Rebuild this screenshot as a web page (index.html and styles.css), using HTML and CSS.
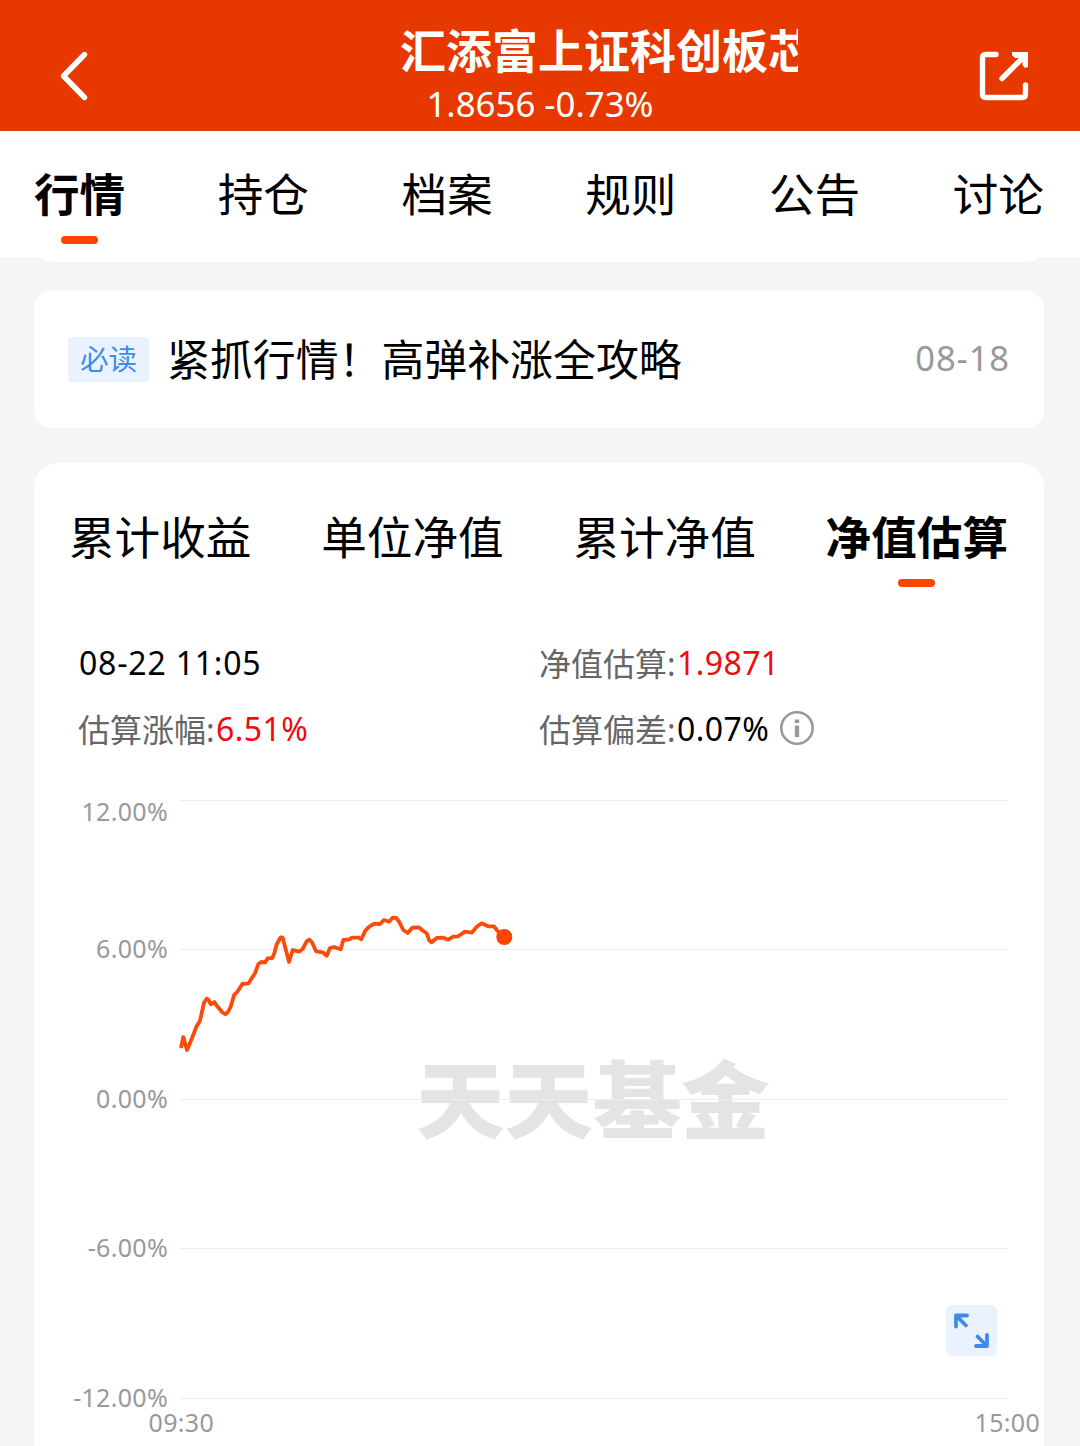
FILE: index.html
```html
<!DOCTYPE html>
<html lang="zh-CN">
<head>
    <meta charset="UTF-8">
    <meta name="viewport" content="width=device-width, initial-scale=1.0">
    <title>汇添富上证科创板芯片</title>
    <link rel="stylesheet" href="styles.css">
</head>
<body>
    <header class="header">
        <svg class="back-icon" viewBox="0 0 32 52" width="32" height="52">
            <path d="M27.5 4.5 L6.5 26 L27.5 47.5" />
        </svg>
        <div class="header-center">
            <h1 class="fund-name">汇添富上证科创板芯</h1>
            <p class="fund-price">1.8656 -0.73%</p>
        </div>
        <svg class="share-icon" viewBox="0 0 52 52" width="52" height="52">
            <path d="M18 4.5 H8 Q4.5 4.5 4.5 8 V44 Q4.5 47.5 8 47.5 H44 Q47.5 47.5 47.5 44 V35" />
            <path d="M24 28.5 L46 6.5" />
            <path class="share-head" d="M34 2 H50 V17 L47 18 L44.5 15 V8 H37 L34 5 Z" />
        </svg>
    </header>

    <nav class="tabs">
        <span class="tab active">行情</span>
        <span class="tab">持仓</span>
        <span class="tab">档案</span>
        <span class="tab">规则</span>
        <span class="tab">公告</span>
        <span class="tab">讨论</span>
    </nav>

    <main class="content">
        <div class="card card-prev"></div>

        <div class="card news">
            <span class="news-tag">必读</span>
            <span class="news-title">紧抓行情！高弹补涨全攻略</span>
            <span class="news-date">08-18</span>
        </div>

        <section class="card chart-card">
            <div class="chart-tabs">
                <span class="tab">累计收益</span>
                <span class="tab">单位净值</span>
                <span class="tab">累计净值</span>
                <span class="tab active">净值估算</span>
            </div>

            <div class="stats">
                <div class="stat stat-time">08-22 11:05</div>
                <div class="stat"><span class="label">净值估算:</span><span class="up">1.9871</span></div>
                <div class="stat"><span class="label">估算涨幅:</span><span class="up">6.51%</span></div>
                <div class="stat">
                    <span class="label">估算偏差:</span><span>0.07%</span>
                    <svg class="info-icon" viewBox="0 0 34 34" width="34" height="34">
                        <circle cx="17" cy="17" r="15.7" />
                        <path d="M17 8.5 V12 M17 14.5 V26" />
                    </svg>
                </div>
            </div>

            <div class="chart">
                <svg viewBox="34 780 1010 666" width="1010" height="666">
                    <!-- Marca de agua -->
                    <text class="watermark" transform="translate(416 1132) scale(1 0.95)" textLength="354">天天基金</text>

                    <!-- Rejilla -->
                    <path class="grid" d="M180 800.5 H1008 M180 949.5 H1008 M180 1099.5 H1008 M180 1248.5 H1008 M180 1398.5 H1008" />

                    <!-- Etiquetas -->
                    <g class="axis" text-anchor="end">
                        <text x="168" y="820.5">12.00%</text>
                        <text x="168" y="957.5">6.00%</text>
                        <text x="168" y="1107.5">0.00%</text>
                        <text x="168" y="1256.5">-6.00%</text>
                        <text x="168" y="1406.5">-12.00%</text>
                        <text x="214" y="1431.5">09:30</text>
                        <text x="1040" y="1431.5">15:00</text>
                    </g>

                    <polyline class="line" points="181,1048 183.3,1037 187,1050 190,1043 194,1033 196.7,1026 200,1020.7 201.7,1013 204,1002.7 206.7,998.7 208.7,1000 210.7,1004.3 214.3,1002 217.3,1006.3 222,1012 225.3,1014.3 228,1012 230.7,1006.7 234,995.3 237.7,991.3 242.3,984 248.7,983.3 251.7,978.3 255.3,972.7 258.3,964 261.3,962 265.3,962.3 267.7,958.3 272.3,958 274.3,953.3 276.7,944.3 280.7,937.3 282.7,937.7 285,946.7 289,962 292.7,950 299,951.7 302.7,949 306.7,941.3 309.3,939.7 312,942.3 316,951.3 322.7,952.3 326.7,955.7 330,948 334,947 340.7,949.3 343.3,940 349.3,939.3 352,937.7 358.7,937.7 361.3,939.3 365.3,930.7 369.3,926.7 374.3,923.7 380,924 384,920 389,921.7 392.7,917.7 396.3,918 399.3,922 403.3,930 407.7,933 412.3,927.7 418.7,927.3 423.3,931 426.7,933.3 429.3,940.7 431.7,942.3 436.7,938 443.3,937.7 448,939.7 453.3,936.7 458.3,936.3 464.7,931.7 472,932.7 476.7,926.7 481.7,923.3 488,926.3 494,926.3 497.3,930.7 504.3,937" />
                    <circle class="dot" cx="504.3" cy="937" r="8" />
                </svg>

                <div class="expand">
                    <svg viewBox="0 0 51 51" width="51" height="51">
                        <path d="M21 10.5 H10 V21.5 M10.5 11 L20 20.5" />
                        <path d="M30 41 H41 V30 M40.5 40.5 L31.5 31.5" />
                    </svg>
                </div>
            </div>
        </section>
    </main>
</body>
</html>
```
FILE: styles.css
```css
* {
    margin: 0;
    padding: 0;
    box-sizing: border-box;
}

body {
    height: 1446px;
    background: #f5f5f5;
    color: #000;
    font-family: 'Noto Sans', 'Noto Sans CJK SC', sans-serif;
    overflow: hidden;
}

svg {
    display: block;
}

/* Cabecera */
.header {
    display: flex;
    justify-content: space-between;
    height: 131px;
    padding: 0 50px 0 57px;
    background: #e73800;
    color: white;
}

.back-icon,
.share-icon {
    margin-top: 50px;
    fill: none;
    stroke: white;
    stroke-width: 5.4;
    stroke-linecap: round;
    stroke-linejoin: round;
}

.share-icon .share-head {
    fill: white;
    stroke: none;
}

.header-center {
    width: 518px;
    margin-left: 11px;
    padding-top: 20px;
}

.fund-name {
    padding-left: 120px;
    font-size: 46px;
    line-height: 60px;
    font-weight: bold;
    white-space: nowrap;
    overflow: hidden;
}

.fund-price {
    font-size: 34.8px;
    line-height: 48px;
    text-align: center;
    text-indent: 2px;
}

/* Pestañas */
.tabs {
    position: relative;
    z-index: 1;
    display: flex;
    justify-content: space-between;
    height: 126px;
    padding: 33px 36px 0 34px;
    background: white;
}

.tab {
    position: relative;
    font-size: 45.6px;
    line-height: 60px;
}

.tab.active {
    font-weight: bold;
}

.tab.active::after {
    content: '';
    position: absolute;
    left: 50%;
    top: 72px;
    width: 37px;
    height: 8px;
    margin-left: -18.5px;
    border-radius: 4px;
    background: #ff4400;
}

.content {
    padding: 0 36px 0 34px;
}

.card {
    background: white;
    border-radius: 18px;
}

.card-prev {
    height: 40px;
    margin-top: -35px;
}

.news {
    display: flex;
    align-items: center;
    height: 137px;
    margin-top: 29px;
    padding: 0 34px;
}

.news-tag {
    width: 81px;
    height: 45px;
    border-radius: 4px;
    background: #eaf2ff;
    color: #3b8cec;
    font-size: 28.5px;
    line-height: 44px;
    text-align: center;
}

.news-title {
    margin-left: 18px;
    font-size: 42.9px;
    line-height: 62px;
}

.news-date {
    margin-left: auto;
    padding-bottom: 3px;
    color: #999;
    font-size: 34.6px;
    line-height: 60px;
    letter-spacing: 0.9px;
}

/* Tarjeta del gráfico */
.chart-card {
    height: 983px;
    margin-top: 35px;
    border-radius: 24px 24px 0 0;
}

.chart-tabs {
    display: flex;
    justify-content: space-between;
    height: 166px;
    padding: 44px 36px 0 35px;
}

.stats {
    display: grid;
    grid-template-columns: 461px 1fr;
    grid-auto-rows: 66px;
    height: 151px;
    padding-left: 44px;
}

.stat {
    display: flex;
    align-items: center;
    font-size: 32px;
    letter-spacing: 0.4px;
}

.stat-time {
    padding-left: 1px;
    letter-spacing: 0.8px;
}

.label {
    margin-right: 1.5px;
    color: #666;
    letter-spacing: 0;
}

.up {
    color: #f00b0f;
}

.info-icon {
    margin-left: 11px;
    fill: none;
    stroke: #999;
    stroke-width: 2.6;
}

.info-icon path {
    stroke-width: 4.4;
}

.chart {
    position: relative;
}

.grid {
    stroke: #ececec;
    stroke-width: 1;
}

.axis {
    fill: #999;
    font-size: 25px;
    letter-spacing: 0.3px;
}

.watermark {
    fill: #e4e4e4;
    font-family: 'Noto Sans CJK SC', sans-serif;
    font-size: 89px;
    font-weight: 900;
}

.line {
    fill: none;
    stroke: #fa4b0a;
    stroke-width: 3.8;
    stroke-linejoin: round;
}

.dot {
    fill: #ff4400;
}

.expand {
    position: absolute;
    right: 47px;
    top: 525px;
    border-radius: 6px;
    background: #eaf2ff;
}

.expand path {
    fill: none;
    stroke: #3b8cec;
    stroke-width: 3.8;
    stroke-linecap: round;
    stroke-linejoin: round;
}
```
